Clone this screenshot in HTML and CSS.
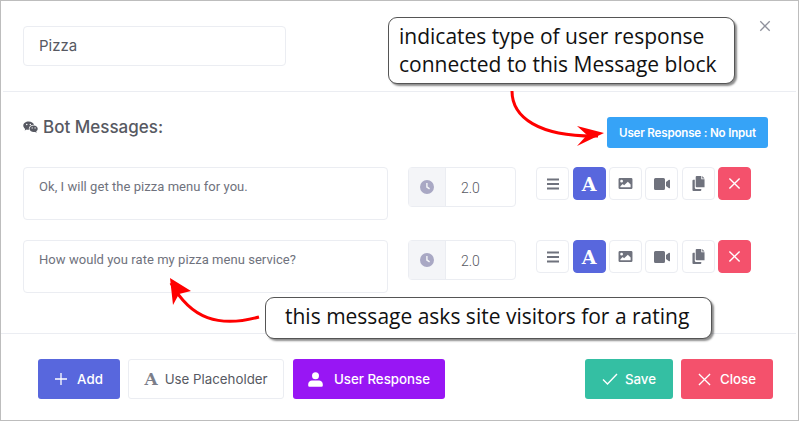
FILE: index.html
```html
<!DOCTYPE html>
<html lang="en">

<head>
    <meta charset="UTF-8">
    <meta name="viewport" content="width=device-width, initial-scale=1.0">
    <title>Bot Messages</title>
    <link rel="stylesheet" href="styles.css">
</head>

<body>
    <svg class="icon-defs" width="0" height="0">
        <symbol id="i-bars" viewBox="0 0 14 14"><path d="M1 1.5h12v2H1zM1 6h12v2H1zM1 10.500h12v2H1z"/></symbol>
        <symbol id="i-image" viewBox="0 0 16 14"><path fill-rule="evenodd" d="M2 1h12a1.500 1.500 0 0 1 1.500 1.500v9A1.500 1.500 0 0 1 14 13H2a1.500 1.500 0 0 1-1.500-1.500v-9A1.500 1.500 0 0 1 2 1zm1.800 2a1.500 1.500 0 1 0 0 3 1.500 1.500 0 0 0 0-3zM2.500 11h11V8l-3-3-4 4-1.500-1.500-2.500 2.500z"/></symbol>
        <symbol id="i-video" viewBox="0 0 16 12"><path d="M1.500 0h8A1.500 1.500 0 0 1 11 1.500v9A1.500 1.500 0 0 1 9.500 12h-8A1.500 1.500 0 0 1 0 10.500v-9A1.500 1.500 0 0 1 1.500 0zM12 4l3-2.200c.4-.3 1-.1 1 .5v7.400c0 .6-.6.800-1 .5L12 8z"/></symbol>
        <symbol id="i-copy" viewBox="0 0 14 16"><path d="M5 0h5v3.500h3.500V12H5a1 1 0 0 1-1-1V1a1 1 0 0 1 1-1zM11 0l2.500 2.500H11zM3 4v8.500A1.500 1.500 0 0 0 4.500 14H10v1a1 1 0 0 1-1 1H1.500a1 1 0 0 1-1-1V5a1 1 0 0 1 1-1z"/></symbol>
        <symbol id="i-clock" viewBox="0 0 14 14"><path fill-rule="evenodd" d="M7 0a7 7 0 1 1 0 14A7 7 0 0 1 7 0zM6.200 3v4.400l3 2 .8-1.200-2.400-1.600V3z"/></symbol>
        <symbol id="i-times" viewBox="0 0 14 14"><path d="M1.500 1.500l11 11M12.500 1.500l-11 11" fill="none" stroke="currentColor" stroke-width="1.500"/></symbol>
    </svg>

    <div class="modal">
        <div class="modal-head">
            <input class="title-input" type="text" value="Pizza">
            <svg class="head-close"><use href="#i-times"/></svg>
        </div>

        <div class="modal-body">
            <div class="body-top">
                <h3 class="section-title">
                    <svg class="wechat" viewBox="0 0 16 14"><path d="M6 1C2.800 1 .3 3 .3 5.500c0 1.400.8 2.700 2.100 3.500L1.800 10.800 4 9.700c.6.200 1.200.3 1.900.3h.5a4 4 0 0 1-.2-1.200C6.200 6.400 8.500 4.600 11.400 4.600h.4C11.200 2.500 8.800 1 6 1zM4 3.600a.8.8 0 1 1 0 1.600.8.800 0 0 1 0-1.600zm3.800 0a.8.8 0 1 1 0 1.600.8.800 0 0 1 0-1.600zM11.400 5.400c-2.500 0-4.500 1.600-4.500 3.500s2 3.500 4.500 3.500c.5 0 1-.1 1.500-.2l1.700.9-.5-1.500c1-.7 1.600-1.600 1.600-2.700 0-1.900-1.800-3.500-4.300-3.500zM9.800 7.300a.7.700 0 1 1 0 1.400.7.700 0 0 1 0-1.400zm3.100 0a.7.700 0 1 1 0 1.400.7.700 0 0 1 0-1.400z"/></svg>
                    Bot Messages:
                </h3>
                <span class="response-badge">User Response : No Input</span>
            </div>

            <div class="msg-row">
                <div class="msg-text">Ok, I will get the pizza menu for you.</div>
                <div class="delay">
                    <span class="delay-icon"><svg><use href="#i-clock"/></svg></span>
                    <span class="delay-val">2.0</span>
                </div>
                <div class="tools">
                    <span class="tool"><svg class="ic-bars"><use href="#i-bars"/></svg></span>
                    <span class="tool tool-active">A</span>
                    <span class="tool"><svg class="ic-image"><use href="#i-image"/></svg></span>
                    <span class="tool"><svg class="ic-video"><use href="#i-video"/></svg></span>
                    <span class="tool"><svg class="ic-copy"><use href="#i-copy"/></svg></span>
                    <span class="tool tool-danger"><svg class="ic-times"><use href="#i-times"/></svg></span>
                </div>
            </div>

            <div class="msg-row">
                <div class="msg-text">How would you rate my pizza menu service?</div>
                <div class="delay">
                    <span class="delay-icon"><svg><use href="#i-clock"/></svg></span>
                    <span class="delay-val">2.0</span>
                </div>
                <div class="tools">
                    <span class="tool"><svg class="ic-bars"><use href="#i-bars"/></svg></span>
                    <span class="tool tool-active">A</span>
                    <span class="tool"><svg class="ic-image"><use href="#i-image"/></svg></span>
                    <span class="tool"><svg class="ic-video"><use href="#i-video"/></svg></span>
                    <span class="tool"><svg class="ic-copy"><use href="#i-copy"/></svg></span>
                    <span class="tool tool-danger"><svg class="ic-times"><use href="#i-times"/></svg></span>
                </div>
            </div>
        </div>

        <div class="modal-foot">
            <button class="btn btn-add" type="button">
                <svg class="btn-ic" viewBox="0 0 12 12"><path d="M6 0v12M0 6h12" fill="none" stroke="currentColor" stroke-width="1.300"/></svg>Add
            </button>
            <button class="btn btn-outline" type="button"><span class="btn-a">A</span>Use Placeholder</button>
            <button class="btn btn-purple" type="button">
                <svg class="btn-ic-user" viewBox="0 0 15 15" fill="currentColor"><circle cx="7.500" cy="3.800" r="3.500"/><path d="M4.300 8.500h6.400A3.800 3.800 0 0 1 14.800 12.300v1.200a1.300 1.300 0 0 1-1.300 1.300h-12A1.300 1.300 0 0 1 .2 13.500v-1.200A3.800 3.800 0 0 1 4.300 8.500z"/></svg>User Response
            </button>
            <span class="foot-gap"></span>
            <button class="btn btn-save" type="button">
                <svg class="btn-ic-wide" viewBox="0 0 16 12"><path d="M1 6.500l4.500 4.500L15 1" fill="none" stroke="currentColor" stroke-width="1.400"/></svg>Save
            </button>
            <button class="btn btn-close" type="button">
                <svg class="btn-ic-x" viewBox="0 0 14 14"><path d="M1 1l12 12M13 1L1 13" fill="none" stroke="currentColor" stroke-width="1.400"/></svg>Close
            </button>
        </div>

        <!-- annotations drawn over the screenshot -->
        <svg class="arrows" viewBox="0 0 799 421">
            <path d="M512 91c0 26 26 46 86 45" fill="none" stroke="#f00" stroke-width="3"/>
            <path d="M604 133l-27-7 10 9-10 11z" fill="#f00"/>
            <path d="M259 317c-40 11-68 2-88-34" fill="none" stroke="#f00" stroke-width="3"/>
            <path d="M170 278l3 27 6-11 12-3z" fill="#f00"/>
        </svg>
        <div class="callout callout-top">indicates type of user response<br>connected to this Message block</div>
        <div class="callout callout-bottom">this message asks site visitors for a rating</div>
    </div>
</body>

</html>
```

FILE: styles.css
```css
body {
    font-family: "Inter", "Liberation Sans", sans-serif;
    background-color: #fff;
    margin: 0;
    padding: 0;
}

.icon-defs {
    position: absolute;
}

.modal {
    position: relative;
    width: 799px;
    height: 421px;
    box-sizing: border-box;
    border: 1px solid #bdbdbd;
    background-color: #fff;
    overflow: hidden;
}

.modal-head {
    display: flex;
    justify-content: space-between;
    align-items: flex-start;
    height: 91px;
    box-sizing: border-box;
    margin: 0 2px;
    padding: 25px 25px 0 20px;
    border-bottom: 1px solid #ebedf2;
}

.title-input {
    width: 263px;
    height: 40px;
    box-sizing: border-box;
    padding: 0 15px 2px;
    border: 1px solid #ebedf2;
    border-radius: 4px;
    font-family: "Inter", sans-serif;
    font-size: 15px;
    color: #575962;
}

.head-close {
    width: 12px;
    height: 12px;
    margin-top: -6px;
    color: #8f919c;
}

.modal-body {
    padding: 25px 28px 40px 22px;
    height: 242px;
    box-sizing: border-box;
    margin: 0 2px 0 0;
    border-bottom: 1px solid #ebedf2;
}

.body-top {
    display: flex;
    justify-content: space-between;
    align-items: center;
    height: 31px;
    margin-bottom: 19px;
}

.section-title {
    display: flex;
    align-items: center;
    gap: 5px;
    margin: 0 0 11px;
    font-size: 17px;
    font-weight: 500;
    color: #575962;
}

.wechat {
    width: 15px;
    height: 14px;
    fill: #575962;
}

.response-badge {
    display: flex;
    align-items: center;
    justify-content: center;
    width: 161px;
    height: 31px;
    background-color: #36a3f7;
    border-radius: 3px;
    color: #fff;
    font-size: 11.600px;
    font-weight: 600;
    letter-spacing: -0.2px;
}

.msg-row {
    display: flex;
    align-items: flex-start;
    height: 53px;
    margin-bottom: 20px;
}

.msg-row:last-child {
    margin-bottom: 0;
}

.msg-text {
    width: 365px;
    height: 53px;
    box-sizing: border-box;
    padding: 11px 15px;
    border: 1px solid #ebedf2;
    border-radius: 4px;
    font-family: "Roboto", sans-serif;
    font-size: 13px;
    line-height: 16px;
    letter-spacing: 0.05px;
    color: #6f727d;
}

.delay {
    display: flex;
    width: 108px;
    height: 40px;
    margin: 0 20.200px 0 20px;
    box-sizing: border-box;
    border: 1px solid #ebedf2;
    border-radius: 4px;
}

.delay-icon {
    display: flex;
    align-items: center;
    justify-content: center;
    width: 36px;
    background-color: #f4f5f8;
    border-right: 1px solid #ebedf2;
}

.delay-icon svg {
    width: 14px;
    height: 14px;
    fill: #a9a8c4;
}

.delay-val {
    padding: 12px 15px;
    font-family: "Roboto", sans-serif;
    font-size: 14px;
    font-weight: 300;
    line-height: 16px;
    color: #575962;
}

.tools {
    display: flex;
    gap: 3.400px;
}

.tool {
    display: flex;
    align-items: center;
    justify-content: center;
    width: 33px;
    height: 33px;
    box-sizing: border-box;
    border: 1px solid #ebedf2;
    border-radius: 4px;
    fill: #6f727d;
}

.tool-active {
    background-color: #5867dd;
    border-color: #5867dd;
    color: #fff;
    font-family: "DejaVu Serif", serif;
    font-size: 19px;
    font-weight: 700;
}

.tool-danger {
    background-color: #f4516c;
    border-color: #f4516c;
    color: #fff;
}

.ic-bars {
    width: 14px;
    height: 14px;
}

.ic-image {
    width: 15px;
    height: 13px;
}

.ic-video {
    width: 16px;
    height: 12px;
}

.ic-copy {
    width: 13px;
    height: 15px;
}

.ic-times {
    width: 13px;
    height: 13px;
}

.modal-foot {
    display: flex;
    gap: 8px;
    padding: 25px 25px 0 37px;
}

.foot-gap {
    flex: 1;
}

.btn {
    display: flex;
    align-items: center;
    justify-content: center;
    height: 40px;
    border: none;
    border-radius: 3px;
    color: #fff;
    font-family: "Inter", sans-serif;
    font-size: 13.300px;
    font-weight: 500;
    padding: 0;
}

.btn-add {
    width: 82px;
    background-color: #5867dd;
}

.btn-ic {
    width: 12px;
    height: 12px;
    margin-right: 10px;
}

.btn-outline {
    width: 156px;
    background-color: #fff;
    border: 1px solid #ebedf2;
    color: #575962;
    font-weight: 400;
}

.btn-a {
    margin-right: 7px;
    font-family: "DejaVu Serif", serif;
    font-size: 17px;
    font-weight: 700;
    color: #7b7e8a;
}

.btn-purple {
    width: 152px;
    margin-left: 1px;
    background-color: #9816f4;
}

.btn-ic-user {
    width: 15px;
    height: 15px;
    margin-right: 11px;
}

.btn-save {
    width: 88px;
    background-color: #34bfa3;
}

.btn-ic-wide {
    width: 16px;
    height: 12px;
    margin-right: 7px;
}

.btn-close {
    width: 92px;
    background-color: #f4516c;
}

.btn-ic-x {
    width: 13px;
    height: 13px;
    margin-right: 9px;
}

.arrows {
    position: absolute;
    left: -1px;
    top: -1px;
    width: 799px;
    height: 421px;
}

.callout {
    position: absolute;
    box-sizing: border-box;
    background-color: #fff;
    border: 1px solid #555;
    border-radius: 9px;
    box-shadow: 2px 2px 2px rgba(0, 0, 0, 0.45);
    font-family: "Open Sans", sans-serif;
    color: #111;
    font-size: 21px;
}

.callout-top {
    left: 387px;
    top: 16px;
    width: 347px;
    height: 67px;
    padding: 5px 10px;
    line-height: 27.500px;
}

.callout-bottom {
    left: 264px;
    top: 296px;
    width: 447px;
    height: 42px;
    padding: 4px 19px;
    line-height: 28px;
}
```
